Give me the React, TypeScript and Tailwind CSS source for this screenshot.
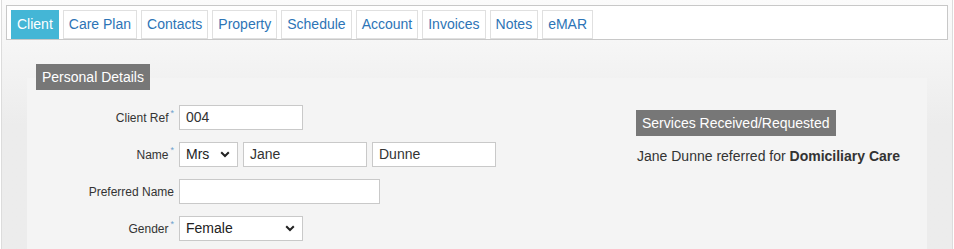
import React from 'react';

const TABS = ['Client', 'Care Plan', 'Contacts', 'Property', 'Schedule', 'Account', 'Invoices', 'Notes', 'eMAR'];

const Chevron = () => (
  <svg width="10" height="7" viewBox="0 0 10 7" className="pointer-events-none">
    <path d="M1.2 1.2 L5 5 L8.8 1.2" fill="none" stroke="#222" strokeWidth="2" />
  </svg>
);

const Label = ({ text, req }: { text: string; req?: boolean }) => (
  <div className="w-[147px] shrink-0 text-right text-[12px] text-[#333]">
    {text}
    {req && <span className="text-[9px] text-[#6f9fcc] ml-[2px] relative -top-[6px]">*</span>}
  </div>
);

const Input = ({ value, w }: { value?: string; w: string }) => (
  <div className={`${w} h-[25px] bg-white border border-[#c9c9c9] px-[6px] flex items-center text-[14px] text-[#333]`}>
    {value}
  </div>
);

const Select = ({ value, w }: { value: string; w: string }) => (
  <div className={`${w} h-[25px] bg-white border border-[#c9c9c9] pl-[6px] pr-[7px] flex items-center justify-between text-[14px] text-[#222]`}>
    <span>{value}</span>
    <Chevron />
  </div>
);

export default function App() {
  return (
    <div
      className="w-[952px] h-[249px] ml-[1px] border-x border-[#dcdcdc] bg-gradient-to-b from-[#fbfbfb] via-[#ececec] to-[#ececec] overflow-hidden"
      style={{ fontFamily: '"Liberation Sans", Arial, sans-serif' }}
    >
      <div className="pt-[5px] px-[4px]">
        <div className="h-[35px] bg-white border border-[#c8c8c8] pl-[4px] pt-[4px] flex items-end gap-[4px]">
          {TABS.map((t, i) => (
            <div
              key={t}
              className={`h-[29px] px-[5px] flex items-center text-[14px] border ${
                i === 0 ? 'bg-[#44b6d6] border-[#44b6d6] text-white' : 'bg-white border-[#e0e0e0] text-[#2d74b6]'
              }`}
            >
              {t}
            </div>
          ))}
        </div>
      </div>

      <div className="mt-[38px] ml-[25px] w-[900px] h-[200px] bg-[#f4f4f4] relative flex">
        <div className="absolute -top-[14px] left-[9px] h-[26px] px-[6px] bg-[#777777] text-white text-[14px] flex items-center">
          Personal Details
        </div>

        <div className="w-[609px] pt-[27px] flex flex-col gap-[12px]">
          <div className="flex items-center gap-[5px]">
            <Label text="Client Ref" req />
            <Input value="004" w="w-[124px]" />
          </div>
          <div className="flex items-center gap-[5px]">
            <Label text="Name" req />
            <Select value="Mrs" w="w-[59px]" />
            <Input value="Jane" w="w-[124px]" />
            <Input value="Dunne" w="w-[124px]" />
          </div>
          <div className="flex items-center gap-[5px]">
            <Label text="Preferred Name" />
            <Input w="w-[201px]" />
          </div>
          <div className="flex items-center gap-[5px]">
            <Label text="Gender" req />
            <Select value="Female" w="w-[124px]" />
          </div>
        </div>

        <div className="pt-[32px] flex flex-col items-start">
          <div className="h-[26px] px-[6px] bg-[#777777] text-white text-[14px] flex items-center">
            Services Received/Requested
          </div>
          <div className="mt-[10px] ml-[1px] text-[14px] text-[#333]">
            Jane Dunne referred for <span className="font-bold">Domiciliary Care</span>
          </div>
        </div>
      </div>
    </div>
  );
}
